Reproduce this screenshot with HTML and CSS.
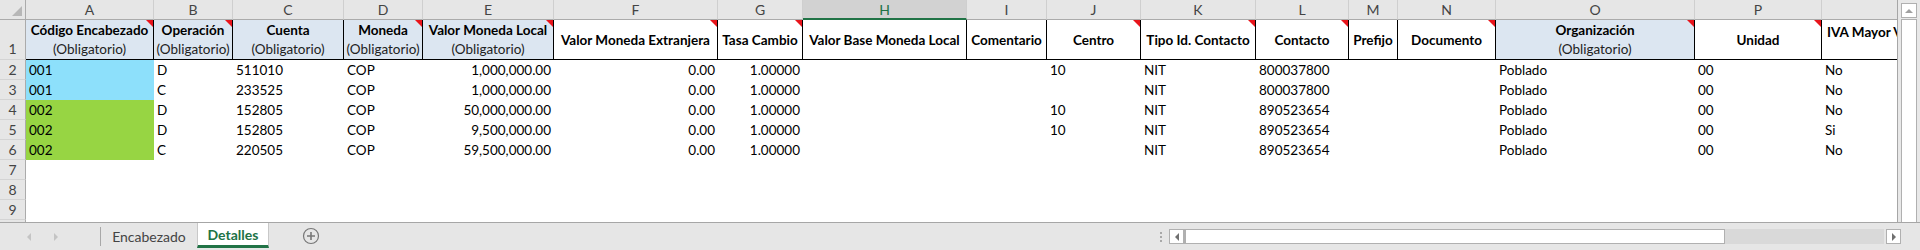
FILE: index.html
```html
<!DOCTYPE html>
<html lang="es">
<head>
<meta charset="utf-8">
<title>Detalles</title>
<link rel="stylesheet" href="styles.css">
</head>
<body>
<div class="app">
  <div class="sheet-area">
    <div class="grid">
      <!-- column header row -->
      <div class="corner"><span class="corner-tri"></span></div>
      <div class="colh">A</div>
      <div class="colh">B</div>
      <div class="colh">C</div>
      <div class="colh">D</div>
      <div class="colh">E</div>
      <div class="colh">F</div>
      <div class="colh">G</div>
      <div class="colh sel">H</div>
      <div class="colh">I</div>
      <div class="colh">J</div>
      <div class="colh">K</div>
      <div class="colh">L</div>
      <div class="colh">M</div>
      <div class="colh">N</div>
      <div class="colh">O</div>
      <div class="colh">P</div>
      <div class="colh last"></div>

      <!-- row 1 -->
      <div class="rowh tall">1</div>
      <div class="hc req note"><b>Código Encabezado</b><span>(Obligatorio)</span></div>
      <div class="hc req note"><b>Operación</b><span>(Obligatorio)</span></div>
      <div class="hc req"><b>Cuenta</b><span>(Obligatorio)</span></div>
      <div class="hc req note"><b>Moneda</b><span>(Obligatorio)</span></div>
      <div class="hc req note"><b>Valor Moneda Local</b><span>(Obligatorio)</span></div>
      <div class="hc note"><b>Valor Moneda Extranjera</b></div>
      <div class="hc note"><b>Tasa Cambio</b></div>
      <div class="hc"><b>Valor Base Moneda Local</b></div>
      <div class="hc"><b>Comentario</b></div>
      <div class="hc note"><b>Centro</b></div>
      <div class="hc note"><b>Tipo Id. Contacto</b></div>
      <div class="hc note"><b>Contacto</b></div>
      <div class="hc"><b>Prefijo</b></div>
      <div class="hc note"><b>Documento</b></div>
      <div class="hc req note"><b>Organización</b><span>(Obligatorio)</span></div>
      <div class="hc note"><b>Unidad</b></div>
      <div class="hc top"><b>IVA Mayor Valor</b></div>

      <!-- row 2 -->
      <div class="rowh">2</div>
      <div class="c cyan">001</div><div class="c">D</div><div class="c">511010</div><div class="c">COP</div>
      <div class="c r">1,000,000.00</div><div class="c r">0.00</div><div class="c r">1.00000</div>
      <div class="c"></div><div class="c"></div><div class="c">10</div><div class="c">NIT</div><div class="c">800037800</div>
      <div class="c"></div><div class="c"></div><div class="c">Poblado</div><div class="c">00</div><div class="c">No</div>

      <!-- row 3 -->
      <div class="rowh">3</div>
      <div class="c cyan">001</div><div class="c">C</div><div class="c">233525</div><div class="c">COP</div>
      <div class="c r">1,000,000.00</div><div class="c r">0.00</div><div class="c r">1.00000</div>
      <div class="c"></div><div class="c"></div><div class="c"></div><div class="c">NIT</div><div class="c">800037800</div>
      <div class="c"></div><div class="c"></div><div class="c">Poblado</div><div class="c">00</div><div class="c">No</div>

      <!-- row 4 -->
      <div class="rowh">4</div>
      <div class="c green">002</div><div class="c">D</div><div class="c">152805</div><div class="c">COP</div>
      <div class="c r">50,000,000.00</div><div class="c r">0.00</div><div class="c r">1.00000</div>
      <div class="c"></div><div class="c"></div><div class="c">10</div><div class="c">NIT</div><div class="c">890523654</div>
      <div class="c"></div><div class="c"></div><div class="c">Poblado</div><div class="c">00</div><div class="c">No</div>

      <!-- row 5 -->
      <div class="rowh">5</div>
      <div class="c green">002</div><div class="c">D</div><div class="c">152805</div><div class="c">COP</div>
      <div class="c r">9,500,000.00</div><div class="c r">0.00</div><div class="c r">1.00000</div>
      <div class="c"></div><div class="c"></div><div class="c">10</div><div class="c">NIT</div><div class="c">890523654</div>
      <div class="c"></div><div class="c"></div><div class="c">Poblado</div><div class="c">00</div><div class="c">Si</div>

      <!-- row 6 -->
      <div class="rowh">6</div>
      <div class="c green">002</div><div class="c">C</div><div class="c">220505</div><div class="c">COP</div>
      <div class="c r">59,500,000.00</div><div class="c r">0.00</div><div class="c r">1.00000</div>
      <div class="c"></div><div class="c"></div><div class="c"></div><div class="c">NIT</div><div class="c">890523654</div>
      <div class="c"></div><div class="c"></div><div class="c">Poblado</div><div class="c">00</div><div class="c">No</div>

      <div class="rowh">7</div><div class="blank"></div>
      <div class="rowh">8</div><div class="blank"></div>
      <div class="rowh">9</div><div class="blank"></div>
      <div class="rowh"></div><div class="blank"></div>
    </div>
    <div class="vscroll">
      <div class="vbtn"><span class="tri-up"></span></div>
      <div class="vthumb"></div>
    </div>
  </div>
  <div class="tabbar">
    <div class="nav">
      <span class="tri-left"></span>
      <span class="tri-right"></span>
    </div>
    <div class="tabs">
      <div class="tab">Encabezado</div>
      <div class="tab active">Detalles</div>
      <div class="add">
        <svg width="18" height="18" viewBox="0 0 18 18"><circle cx="9" cy="9" r="7.5" fill="none" stroke="#777" stroke-width="1.2"/><path d="M9 5v8M5 9h8" stroke="#777" stroke-width="1.6"/></svg>
      </div>
    </div>
    <div class="split"><i></i><i></i><i></i></div>
    <div class="hscroll">
      <div class="hbtn"><span class="tri-l-dark"></span></div>
      <div class="hthumb"></div>
      <div class="htrack"></div>
      <div class="hbtn right"><span class="tri-r-dark"></span></div>
    </div>
  </div>
</div>
</body>
</html>
```
FILE: styles.css
```css
* { box-sizing: border-box; }
html, body { margin: 0; padding: 0; background: #fff; }
body { font-family: "Lato", "Liberation Sans", sans-serif; font-size: 13.5px; color: #000; }

.app { width: 1920px; height: 250px; overflow: hidden; display: flex; flex-direction: column; }

.sheet-area { height: 223px; display: flex; border-bottom: 1px solid #a6a6a6; }

.grid {
  width: 1899px;
  height: 222px;
  overflow: hidden;
  border-right: 1px solid #a6a6a6;
  display: grid;
  grid-template-columns: 26px 128px 79px 111px 79px 131px 164px 85px 164px 80px 94px 115px 93px 49px 98px 199px 127px 160px;
  grid-template-rows: 20px 40px repeat(9, 20px);
}

.corner { background: #e6e6e6; border-right: 1px solid #ababab; border-bottom: 1px solid #ababab; position: relative; }
.corner-tri { position: absolute; right: 3px; bottom: 3px; width: 0; height: 0; border-style: solid; border-width: 0 0 10px 10px; border-color: transparent transparent #b7b7b7 transparent; }

.colh {
  background: #e6e6e6;
  color: #444;
  border-right: 1px solid #cfcfcf;
  border-bottom: 1px solid #ababab;
  text-align: center;
  line-height: 19px;
  font-size: 14px;
}
.colh.sel { background: #d2d2d2; color: #217346; border-bottom: 2px solid #217346; }
.colh.last { border-right: none; }

.rowh {
  grid-column: 1;
  background: #e6e6e6;
  color: #444;
  border-right: 1px solid #ababab;
  border-bottom: 1px solid #d4d4d4;
  text-align: center;
  font-size: 14px;
  line-height: 19px;
}
.rowh.tall { display: flex; align-items: flex-end; justify-content: center; padding-bottom: 1px; }

.hc {
  position: relative;
  border-right: 1px solid #000;
  border-bottom: 1px solid #000;
  background: #fff;
  display: flex;
  flex-direction: column;
  align-items: center;
  justify-content: center;
  white-space: nowrap;
  overflow: hidden;
  line-height: 19px;
  padding-top: 1px;
}
.hc b { font-weight: 700; color: #000; }
.hc span { color: #222; }
.hc.req { background: #dce6f1; }
.hc.top { justify-content: flex-start; align-items: flex-start; padding: 3px 0 0 5px; border-right: none; overflow: hidden; }
.hc.note::after {
  content: "";
  position: absolute;
  top: 0;
  right: 0;
  width: 0;
  height: 0;
  border-style: solid;
  border-width: 0 7px 7px 0;
  border-color: transparent #e8141b transparent transparent;
}

.c { padding: 0 3px; line-height: 20px; white-space: nowrap; overflow: hidden; }
.c.r { text-align: right; }
.cyan { background: #8de0fb; }
.green { background: #97d543; }
.blank { grid-column: 2 / -1; }

.vscroll { flex: 1; background: #e8e8e8; position: relative; padding: 3px 3px 0 3px; display: flex; flex-direction: column; align-items: flex-end; }
.vbtn { width: 16px; height: 15px; background: #fff; border: 1px solid #b0b0b0; display: flex; align-items: center; justify-content: center; }
.tri-up { width: 0; height: 0; border-style: solid; border-width: 0 4px 4px 4px; border-color: transparent transparent #a0a0a0 transparent; }
.vthumb { width: 16px; flex: 1; margin-top: 1px; background: #fff; border: 1px solid #b0b0b0; border-bottom: none; }

.tabbar { flex: 1; background: #e6e6e6; display: flex; align-items: stretch; }
.nav { width: 101px; display: flex; align-items: center; padding-left: 27px; gap: 23px; border-right: 1px solid #a8a8a8; margin: 4px 0 4px 0; }
.tri-left { width: 0; height: 0; border-style: solid; border-width: 4px 4px 4px 0; border-color: transparent #c4c4c4 transparent transparent; }
.tri-right { width: 0; height: 0; border-style: solid; border-width: 4px 0 4px 4px; border-color: transparent transparent transparent #c4c4c4; }

.tabs { display: flex; align-items: stretch; }
.tab { font-size: 14px; color: #444; padding: 0 11px; display: flex; align-items: center; width: 96px; justify-content: center; padding-bottom: 1px; }
.tab.active { background: #fff; color: #217346; font-weight: 700; width: 72px; border-bottom: 3px solid #217346; margin-bottom: 2px; padding-bottom: 0; padding-top: 1px; border-left: 1px solid #c8c8c8; border-right: 1px solid #c8c8c8; }
.add { display: flex; align-items: center; margin-left: 33px; padding-bottom: 1px; }

.split { margin-left: auto; width: 16px; display: flex; flex-direction: column; justify-content: center; align-items: center; gap: 2px; }
.split i { display: block; width: 2px; height: 2px; background: #a8a8a8; }

.hscroll { width: 751px; display: flex; align-items: center; padding-right: 19px; }
.hbtn { width: 15px; height: 15px; background: #fff; border: 1px solid #b0b0b0; display: flex; align-items: center; justify-content: center; }
.hbtn.right { margin-left: 2px; }
.tri-l-dark { width: 0; height: 0; border-style: solid; border-width: 4px 4px 4px 0; border-color: transparent #707070 transparent transparent; }
.tri-r-dark { width: 0; height: 0; border-style: solid; border-width: 4px 0 4px 4px; border-color: transparent transparent transparent #707070; }
.hthumb { width: 541px; height: 15px; background: #fff; border: 1px solid #b0b0b0; border-left-width: 2px; }
.htrack { flex: 1; height: 15px; background: #d9d9d9; }
```
